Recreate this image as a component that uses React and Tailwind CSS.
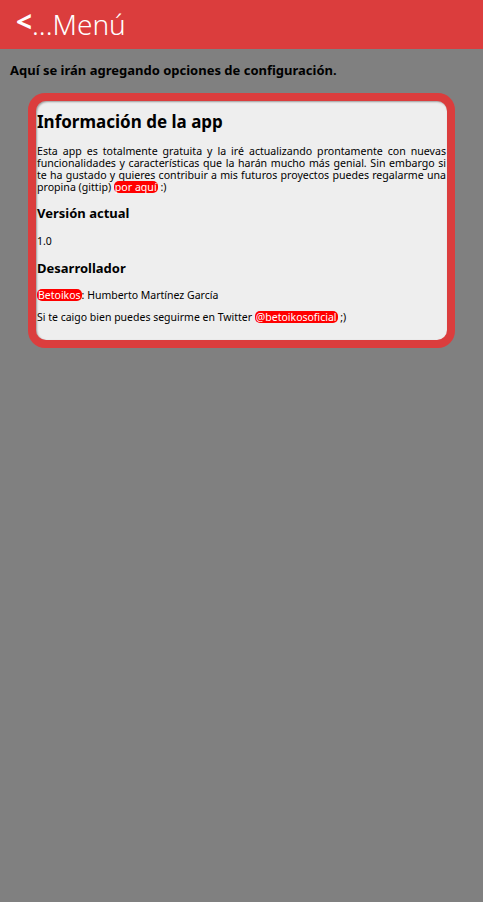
import React from "react";

const Tag = ({ children }) => (
  <span className="inline-block leading-[12px] bg-[#ff0000] text-white rounded-[5px] px-[1px]">{children}</span>
);

const App = () => {
  return (
    <div className="min-h-[902px] w-full bg-[#808080] font-['Noto_Sans',sans-serif] text-black">
      <header className="h-[49px] bg-[#db3d3d] flex items-center pl-[16px]">
        <span className="text-white text-[28px] leading-none font-bold -mt-[8px]">&lt;</span>
        <span className="text-white text-[28px] leading-none font-light -mt-[2px]">...Menú</span>
      </header>
      <p className="text-[13px] font-bold leading-[18px] pt-[12px] pl-[10px]">
        Aquí se irán agregando opciones de configuración.
      </p>
      <div className="mx-[28px] mt-[14px] bg-[#db3d3d] rounded-[17px] p-[8px]">
        <div className="bg-[#eeeeee] rounded-[10px] px-[1px] pb-[16px] shadow-[inset_1px_1px_2px_rgba(0,0,0,0.35)]">
          <h2 className="text-[17px] font-bold leading-[22px] pt-[10px]">Información de la app</h2>
          <p className="text-[10.6px] leading-[12px] text-justify mt-[12px]">
            Esta app es totalmente gratuita y la iré actualizando prontamente con nuevas funcionalidades y características que la harán mucho más genial. Sin embargo si te ha gustado y quieres contribuir a mis futuros proyectos puedes regalarme una propina (gittip) <Tag>por aquí</Tag> :)
          </p>
          <h3 className="text-[13px] font-bold leading-[18px] mt-[11px]">Versión actual</h3>
          <p className="text-[10.5px] leading-[14px] mt-[12px]">1.0</p>
          <h3 className="text-[13px] font-bold leading-[18px] mt-[11px]">Desarrollador</h3>
          <p className="text-[10.5px] leading-[14px] mt-[11px]">
            <Tag>Betoikos</Tag>: Humberto Martínez García
          </p>
          <p className="text-[10.5px] leading-[14px] mt-[8px]">
            Si te caigo bien puedes seguirme en Twitter <Tag>@betoikosoficial</Tag> ;)
          </p>
        </div>
      </div>
    </div>
  );
};

export default App;
